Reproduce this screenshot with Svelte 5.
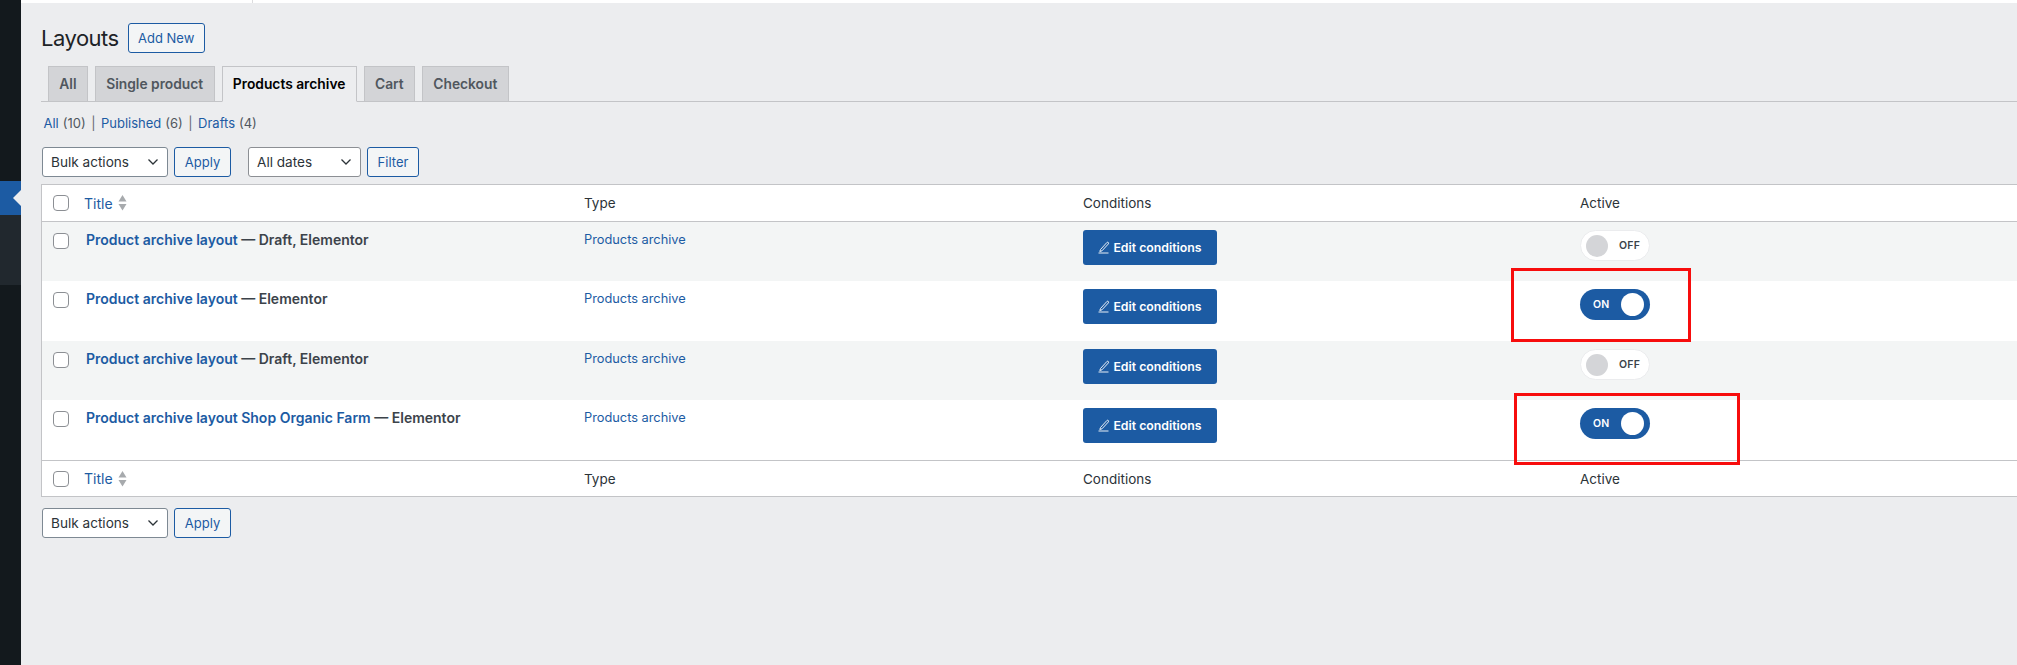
<script>
  const tabs = ['All', 'Single product', 'Products archive', 'Cart', 'Checkout']
  const rows = [
    { name: 'Product archive layout', state: 'Draft, Elementor', on: false, h: 59 },
    { name: 'Product archive layout', state: 'Elementor', on: true, h: 60 },
    { name: 'Product archive layout', state: 'Draft, Elementor', on: false, h: 59 },
    { name: 'Product archive layout Shop Organic Farm', state: 'Elementor', on: true, h: 60 }
  ]
</script>

{#snippet chevron()}
  <svg class="chev" width="12" height="8" viewBox="0 0 12 8"><path d="M1.500 1.500 6 6l4.500-4.500" fill="none" stroke="#2c3338" stroke-width="1.300"/></svg>
{/snippet}

{#snippet sortTitle()}
  <span class="sort-title">
    <a href="#top">Title</a>
    <svg width="9" height="16" viewBox="0 0 9 16"><path d="M4.500 0 8.500 6.500H.5zM4.500 15.500 .5 9h8z" fill="#a7aaad"/></svg>
  </span>
{/snippet}

<div class="page">
  <aside class="sidebar">
    <div class="current"><span class="notch"></span></div>
    <div class="submenu"></div>
  </aside>

  <main class="content">
    <div class="topbar"><span class="topbar-line"></span></div>

    <div class="heading">
      <h1>Layouts</h1>
      <button class="btn add">Add New</button>
    </div>

    <nav class="tabs">
      {#each tabs as tab}
        <span class="tab" class:active={tab === 'Products archive'}>{tab}</span>
      {/each}
    </nav>

    <div class="subsub">
      <a href="#top">All</a> (10) <i>|</i> <a href="#top">Published</a> (6) <i>|</i> <a href="#top">Drafts</a> (4)
    </div>

    <div class="tablenav">
      <div class="select bulk">Bulk actions {@render chevron()}</div>
      <button class="btn apply">Apply</button>
      <div class="select dates">All dates {@render chevron()}</div>
      <button class="btn filter">Filter</button>
    </div>

    <table>
      <colgroup>
        <col class="c-check" /><col class="c-title" /><col class="c-type" /><col class="c-cond" /><col />
      </colgroup>
      <thead>
        <tr>
          <th class="check"><span class="box"></span></th>
          <th>{@render sortTitle()}</th>
          <th>Type</th>
          <th>Conditions</th>
          <th>Active</th>
        </tr>
      </thead>
      <tbody>
        {#each rows as row, i}
          <tr class:alt={i % 2 === 0} style="height: {row.h}px">
            <td class="check"><span class="box"></span></td>
            <td class="name"><a href="#top">{row.name}</a> — {row.state}</td>
            <td class="type"><a href="#top">Products archive</a></td>
            <td>
              <span class="edit">
                <svg width="12" height="13" viewBox="0 0 12 13"><path d="M2.500 8.500 8.800 1.600c.5-.5 1.100-.5 1.500-.1s.4 1 0 1.500L4 9.800l-2.200.7z" fill="none" stroke="#fff" stroke-width=".9"/><path d="M0.500 12h10" stroke="#fff" stroke-width=".9"/></svg>
                Edit conditions
              </span>
            </td>
            <td>
              {#if row.on}
                <span class="toggle on"><b>ON</b><span class="knob"></span></span>
              {:else}
                <span class="toggle off"><span class="knob"></span><b>OFF</b></span>
              {/if}
            </td>
          </tr>
        {/each}
      </tbody>
      <tfoot>
        <tr>
          <th class="check"><span class="box"></span></th>
          <th>{@render sortTitle()}</th>
          <th>Type</th>
          <th>Conditions</th>
          <th>Active</th>
        </tr>
      </tfoot>
    </table>

    <div class="tablenav bottom">
      <div class="select bulk">Bulk actions {@render chevron()}</div>
      <button class="btn apply">Apply</button>
    </div>
  </main>

  <!-- red annotation boxes drawn over the screenshot -->
  <span class="mark mark-a"></span>
  <span class="mark mark-b"></span>
</div>

<style>
  :global(body) {
    margin: 0;
    background: #ecedef;
  }

  .page {
    position: relative;
    display: flex;
    width: 2017px;
    height: 665px;
    overflow: hidden;
    font-family: Inter, "Liberation Sans", sans-serif;
    font-size: 13px;
    color: #3c434a;
  }

  a {
    color: #1c5ba3;
    text-decoration: none;
  }

  .sidebar {
    flex: none;
    width: 21px;
    padding-top: 181px;
    box-sizing: border-box;
    background: #13191d;
  }

  .current {
    position: relative;
    height: 34px;
    background: #1c5ba3;
  }

  .notch {
    position: absolute;
    right: 0;
    top: 9px;
    width: 0;
    height: 0;
    border: 8px solid transparent;
    border-left-width: 0;
    border-right: 8px solid #ecedef;
  }

  .submenu {
    height: 70px;
    background: #21282e;
  }

  .content {
    flex: 1;
    min-width: 0;
    padding-left: 20px;
  }

  .topbar {
    margin-left: -20px;
    height: 3px;
    background: #fff;
    position: relative;
  }

  .topbar-line {
    position: absolute;
    left: 231px;
    top: 0;
    width: 1px;
    height: 3px;
    background: #dcdcde;
  }

  .heading {
    display: flex;
    align-items: center;
    gap: 9px;
    height: 30px;
    margin-top: 20px;
  }

  h1 {
    margin: 0;
    font-size: 22px;
    font-weight: 400;
    letter-spacing: -0.5px;
    color: #1d2327;
  }

  .btn {
    box-sizing: border-box;
    height: 30px;
    padding: 0;
    border: 1px solid #1c5ba3;
    border-radius: 3px;
    background: #f3f5f6;
    color: #1c5ba3;
    font: inherit;
  }

  .add {
    width: 77px;
  }

  .tabs {
    display: flex;
    gap: 7px;
    height: 35px;
    margin-top: 13px;
    padding-left: 7px;
    border-bottom: 1px solid #c3c4c7;
  }

  .tab {
    box-sizing: border-box;
    height: 36px;
    padding: 0 10.300px;
    line-height: 34px;
    border: 1px solid #c3c4c7;
    background: #d3d4d7;
    font-weight: 600;
    font-size: 13.800px;
    color: #50575e;
  }

  .tab.active {
    background: #ecedef;
    border-bottom-color: #ecedef;
    color: #000;
  }

  .subsub {
    margin-top: 11px;
    margin-left: 2.500px;
    height: 20px;
    line-height: 20px;
    color: #50575e;
    word-spacing: 0.3px;
  }

  .subsub i {
    font-style: normal;
    color: #646970;
    margin: 0 1.500px;
  }

  .tablenav {
    display: flex;
    align-items: center;
    gap: 6px;
    height: 30px;
    margin-top: 14px;
    margin-left: 1px;
  }

  .tablenav.bottom {
    margin-top: 11px;
  }

  .select {
    box-sizing: border-box;
    display: flex;
    align-items: center;
    justify-content: space-between;
    height: 30px;
    padding: 0 8px;
    border: 1px solid #8c8f94;
    border-radius: 3px;
    background: #fff;
    color: #2c3338;
    font-size: 13.600px;
  }

  .bulk {
    width: 126px;
    border-color: #7e8993;
  }

  .dates {
    width: 113px;
    margin-left: 11px;
  }

  .apply {
    width: 57px;
  }

  .filter {
    width: 52px;
  }

  table {
    width: calc(100% + 1px);
    margin-top: 7px;
    table-layout: fixed;
    border-collapse: separate;
    border-spacing: 0;
    border: 1px solid #c3c4c7;
    border-right: 0;
    background: #fff;
  }

  .c-check {
    width: 36px;
  }

  .c-title {
    width: 500px;
  }

  .c-type {
    width: 499px;
  }

  .c-cond {
    width: 497px;
  }

  th {
    height: 36px;
    padding: 0 0 0 6px;
    text-align: left;
    font-weight: 400;
    color: #2c3338;
    font-size: 13.500px;
    box-sizing: border-box;
  }

  thead th {
    height: 37px;
    border-bottom: 1px solid #c3c4c7;
  }

  tfoot th {
    border-top: 1px solid #c3c4c7;
  }

  td {
    padding: 8px 0 0 6px;
    vertical-align: top;
    box-sizing: border-box;
  }

  tr.alt {
    background: #f3f5f5;
  }

  th.check,
  td.check {
    padding: 0 0 0 11px;
  }

  td.check {
    padding-top: 11px;
  }

  .box {
    display: block;
    box-sizing: border-box;
    width: 16px;
    height: 16px;
    border: 1px solid #8c8f94;
    border-radius: 4px;
    background: #fff;
  }

  .sort-title {
    display: inline-flex;
    align-items: center;
    gap: 5px;
    font-size: 14px;
  }

  td.name {
    padding: 8px 0 0 8px;
    font-size: 14px;
    font-weight: 600;
    line-height: 20px;
    color: #3c434a;
  }

  td.type {
    padding-top: 9px;
    font-size: 12.800px;
    line-height: 18px;
  }

  .edit {
    box-sizing: border-box;
    display: inline-flex;
    align-items: center;
    justify-content: center;
    gap: 3px;
    width: 134px;
    height: 35px;
    border-radius: 3px;
    background: #1c5ba3;
    color: #fff;
    font-size: 12.300px;
    font-weight: 600;
  }

  .toggle {
    display: flex;
    align-items: center;
    box-sizing: border-box;
    width: 70px;
    height: 31px;
    border-radius: 16px;
    font-size: 10.500px;
  }

  .toggle b {
    font-weight: 600;
    letter-spacing: 0.3px;
  }

  .knob {
    width: 22px;
    height: 22px;
    border-radius: 50%;
  }

  .off {
    padding-left: 5px;
    gap: 11px;
    background: #fff;
    border: 1px solid #ebecee;
  }

  .off .knob {
    background: #d4d5d8;
  }

  .on {
    padding: 0 6px 0 13px;
    justify-content: space-between;
    background: #1c5ba3;
    color: #fff;
  }

  .on .knob {
    width: 23px;
    height: 23px;
    background: #fff;
  }

  .mark {
    position: absolute;
    box-sizing: border-box;
    border: 3px solid #f70d0d;
  }

  .mark-a {
    left: 1511px;
    top: 268px;
    width: 180px;
    height: 74px;
  }

  .mark-b {
    left: 1514px;
    top: 393px;
    width: 226px;
    height: 72px;
  }
</style>
